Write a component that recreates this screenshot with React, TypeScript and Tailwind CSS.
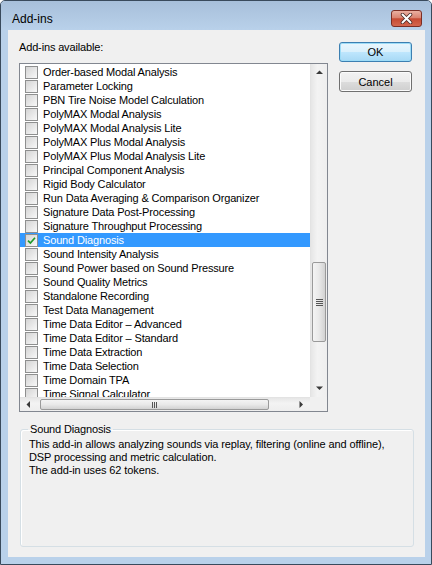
import React from 'react';

const addins = [
  'Order-based Modal Analysis',
  'Parameter Locking',
  'PBN Tire Noise Model Calculation',
  'PolyMAX Modal Analysis',
  'PolyMAX Modal Analysis Lite',
  'PolyMAX Plus Modal Analysis',
  'PolyMAX Plus Modal Analysis Lite',
  'Principal Component Analysis',
  'Rigid Body Calculator',
  'Run Data Averaging & Comparison Organizer',
  'Signature Data Post-Processing',
  'Signature Throughput Processing',
  'Sound Diagnosis',
  'Sound Intensity Analysis',
  'Sound Power based on Sound Pressure',
  'Sound Quality Metrics',
  'Standalone Recording',
  'Test Data Management',
  'Time Data Editor \u2013 Advanced',
  'Time Data Editor \u2013 Standard',
  'Time Data Extraction',
  'Time Data Selection',
  'Time Domain TPA',
  'Time Signal Calculator',
];

const selected = 'Sound Diagnosis';

function CheckBox({ checked }: { checked: boolean }) {
  return (
    <span className="w-[13px] h-[13px] shrink-0 border border-[#8e8f8f] bg-[linear-gradient(135deg,#d4d4d4,#f8f8f8)] flex items-center justify-center">
      {checked && (
        <svg width="9" height="9" viewBox="0 0 9 9">
          <path d="M1 4.6 L3.4 7 L8 1.8" fill="none" stroke="#1f9a2a" strokeWidth="1.7" />
        </svg>
      )}
    </span>
  );
}

function Arrow({ dir }: { dir: 'up' | 'down' | 'left' | 'right' }) {
  const pts = {
    up: '0,4 7,4 3.5,0.5',
    down: '0,0.5 7,0.5 3.5,4',
    left: '4,0 4,7 0.5,3.5',
    right: '0.5,0 0.5,7 4,3.5',
  }[dir];
  const vertical = dir === 'up' || dir === 'down';
  return (
    <svg width={vertical ? 7 : 5} height={vertical ? 5 : 7} viewBox={vertical ? '0 0 7 5' : '0 0 5 7'}>
      <polygon points={pts} fill="#3a3a3a" />
    </svg>
  );
}

function VScrollBar() {
  return (
    <div className="w-[17px] h-[333px] flex flex-col bg-[linear-gradient(to_right,#e6e6e6,#f3f3f3_40%,#eeeeee)] border-l border-[#e3e3e3]">
      <div className="h-[17px] flex items-center justify-center">
        <Arrow dir="up" />
      </div>
      <div className="flex-1 flex flex-col">
        <div className="h-[181px]" />
        <div className="h-[80px] mx-[1px] rounded-[2px] border border-[#9a9a9a] bg-[linear-gradient(to_right,#f4f4f4,#e9e9e9_50%,#d2d2d2)] flex flex-col items-center justify-center gap-[1px]">
          <span className="w-[7px] h-[1px] bg-[#555]" />
          <span className="w-[7px] h-[1px] bg-[#555]" />
          <span className="w-[7px] h-[1px] bg-[#555]" />
          <span className="w-[7px] h-[1px] bg-[#555]" />
        </div>
      </div>
      <div className="h-[17px] flex items-center justify-center">
        <Arrow dir="down" />
      </div>
    </div>
  );
}

function HScrollBar() {
  return (
    <div className="h-[14px] flex bg-[linear-gradient(to_bottom,#e6e6e6,#f3f3f3_40%,#eeeeee)] border-t border-[#e3e3e3]">
      <div className="w-[17px] flex items-center justify-center">
        <Arrow dir="left" />
      </div>
      <div className="w-[3px]" />
      <div className="w-[229px] my-[1px] rounded-[2px] border border-[#9a9a9a] bg-[linear-gradient(to_bottom,#f4f4f4,#e9e9e9_50%,#d2d2d2)] flex items-center justify-center gap-[1px]">
        <span className="w-[1px] h-[6px] bg-[#555]" />
        <span className="w-[1px] h-[6px] bg-[#555]" />
        <span className="w-[1px] h-[6px] bg-[#555]" />
      </div>
      <div className="flex-1" />
      <div className="w-[17px] flex items-center justify-center">
        <Arrow dir="right" />
      </div>
    </div>
  );
}

function ListBox() {
  return (
    <div className="w-[309px] h-[349px] border border-[#828790] bg-white flex flex-col">
      <div className="flex">
        <div className="w-[290px] h-[333px] overflow-hidden pt-[1px]">
          {addins.map((name) => {
            const sel = name === selected;
            return (
              <div
                key={name}
                className={`h-[14px] flex items-center whitespace-nowrap pl-[5px] ${sel ? 'bg-[#3399ff] text-white' : 'text-black'}`}
              >
                <CheckBox checked={sel} />
                <span className="ml-[5px] text-[11px] leading-[14px] tracking-[-0.15px]">{name}</span>
              </div>
            );
          })}
        </div>
        <VScrollBar />
      </div>
      <div className="flex">
        <div className="w-[290px]">
          <HScrollBar />
        </div>
        <div className="w-[17px] h-[14px] bg-[#f0f0f0]" />
      </div>
    </div>
  );
}

export default function App() {
  return (
    <div className="w-[432px] h-[565px] font-['Liberation_Sans',Arial,sans-serif] text-black">
      <div className="w-full h-full flex flex-col border border-[#394a5c] rounded-t-[5px] bg-[#b9d1ea]">
        {/* title bar */}
        <div className="h-[29px] flex items-start justify-between pl-[11px] pr-[9px] pt-[9px] rounded-t-[4px] bg-[linear-gradient(to_bottom,#a7bfda,#b9d1ea)]">
          <span className="text-[12px] leading-[17px] mt-[1px]">Add-ins</span>
          <div className="w-[31px] h-[17px] rounded-[3px] border border-[#7b2e25] bg-[linear-gradient(to_bottom,#eab0a2,#da8370_45%,#c64a33_52%,#d4674f)] flex items-center justify-center">
            <svg width="13" height="11" viewBox="0 0 13 11">
              <path d="M2.5 1.5 L10.5 9.5 M10.5 1.5 L2.5 9.5" stroke="#4a2a26" strokeWidth="3.6" strokeLinecap="round" />
              <path d="M2.5 1.5 L10.5 9.5 M10.5 1.5 L2.5 9.5" stroke="#ffffff" strokeWidth="2" strokeLinecap="round" />
            </svg>
          </div>
        </div>

        {/* client area */}
        <div className="ml-[7px] w-[417px] h-[527px] bg-[#f0f0f0] flex flex-col">
          <div className="flex pl-[11px] pt-[11px]">
            <div className="flex flex-col">
              <span className="text-[11px] leading-[13px] tracking-[-0.15px]">Add-ins available:</span>
              <div className="mt-[9px]">
                <ListBox />
              </div>
            </div>
            <div className="ml-[11px] flex flex-col gap-[9px] pt-[1px]">
              <button className="w-[73px] h-[20px] rounded-[3px] border border-[#3c7fb1] shadow-[inset_0_0_0_1px_#9ddcf7] bg-[linear-gradient(to_bottom,#eaf6fd,#d9f0fc_50%,#bee6fd_51%,#a7d9f5)] text-[11px] leading-[14px]">
                OK
              </button>
              <button className="w-[73px] h-[21px] rounded-[3px] border border-[#707070] shadow-[inset_0_0_0_1px_#fbfbfb] bg-[linear-gradient(to_bottom,#f2f2f2,#ebebeb_50%,#dddddd_51%,#cfcfcf)] text-[11px] leading-[14px]">
                Cancel
              </button>
            </div>
          </div>

          <fieldset className="mt-[11px] ml-[12px] w-[394px] h-[124px] border border-[#d5dfe5] rounded-[3px] shadow-[inset_1px_1px_0_#ffffff] pl-[8px]">
            <legend className="ml-[-1px] px-[2px] text-[11px] leading-[13px] tracking-[-0.15px]">Sound Diagnosis</legend>
            <div className="pt-[2px] text-[11px] leading-[13px] tracking-[-0.1px]">
              <p>This add-in allows analyzing sounds via replay, filtering (online and offline),</p>
              <p>DSP processing and metric calculation.</p>
              <p>The add-in uses 62 tokens.</p>
            </div>
          </fieldset>
        </div>
      </div>
    </div>
  );
}
